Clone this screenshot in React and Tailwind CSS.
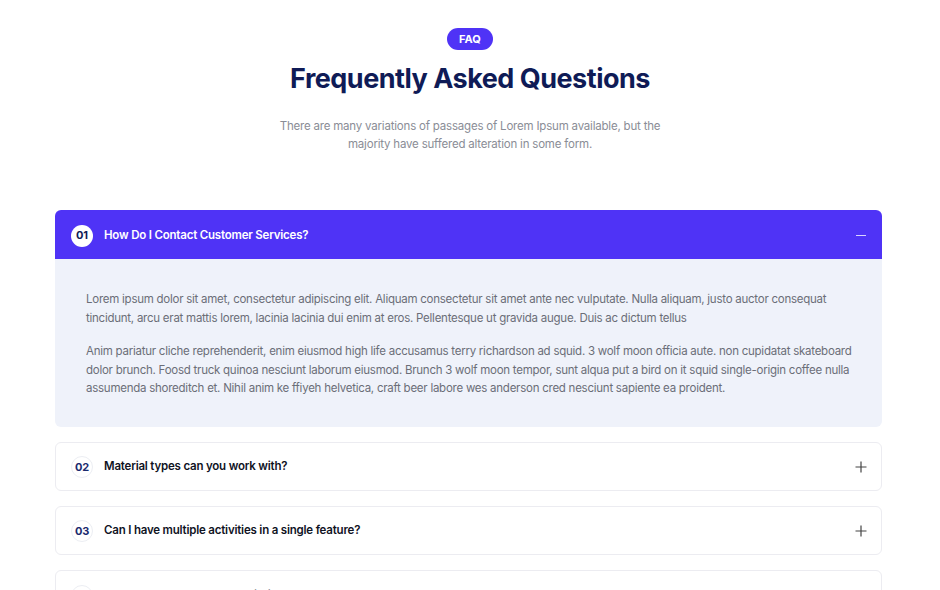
import React from "react";

const items = [
  { n: "02", q: "Material types can you work with?" },
  { n: "03", q: "Can I have multiple activities in a single feature?" },
  { n: "04", q: "How can I cancel my subscription?" },
];

const p1 = [
  "Lorem ipsum dolor sit amet, consectetur adipiscing elit. Aliquam consectetur sit amet ante nec vulputate. Nulla aliquam, justo auctor consequat",
  "tincidunt, arcu erat mattis lorem, lacinia lacinia dui enim at eros. Pellentesque ut gravida augue. Duis ac dictum tellus",
];
const p2 = [
  "Anim pariatur cliche reprehenderit, enim eiusmod high life accusamus terry richardson ad squid. 3 wolf moon officia aute. non cupidatat skateboard",
  "dolor brunch. Foosd truck quinoa nesciunt laborum eiusmod. Brunch 3 wolf moon tempor, sunt alqua put a bird on it squid single-origin coffee nulla",
  "assumenda shoreditch et. Nihil anim ke ffiyeh helvetica, craft beer labore wes anderson cred nesciunt sapiente ea proident.",
];

function Plus() {
  return (
    <svg width="12" height="12" viewBox="0 0 12 12" fill="none" stroke="#444" strokeWidth="1.2">
      <path d="M6 0.5V11.5M0.5 6H11.5" />
    </svg>
  );
}

function Para({ lines, className = "" }) {
  return (
    <p className={className}>
      {lines.map((l, i) => (
        <span key={i} className="block whitespace-nowrap">
          {l}
        </span>
      ))}
    </p>
  );
}

export default function App() {
  return (
    <div
      className="w-[940px] h-[590px] overflow-hidden bg-white"
      style={{ fontFamily: "Inter, 'Noto Sans', sans-serif" }}
    >
      <div className="flex flex-col items-center pt-[28px]">
        <div className="h-[22px] px-[12px] rounded-full bg-[#4f33f6] text-white text-[11px] font-bold flex items-center">
          FAQ
        </div>
        <h1 className="mt-[11px] text-[27px] leading-[36px] font-bold text-[#0f1b56] tracking-[-0.5px]">
          Frequently Asked Questions
        </h1>
        <p className="mt-[20px] text-[11.5px] leading-[18px] tracking-[-0.2px] text-[#8a8d96] text-center w-[390px]">
          There are many variations of passages of Lorem Ipsum available, but the majority have suffered alteration in some form.
        </p>
      </div>

      <div className="ml-[55px] w-[827px] mt-[57px] flex flex-col gap-[15px]">
        <div className="rounded-[6px] overflow-hidden">
          <div className="h-[49px] bg-[#4f33f6] flex items-center pl-[16px] pr-[15px] pt-[2px]">
            <div className="w-[22px] h-[22px] rounded-full bg-white flex items-center justify-center text-[11px] font-bold text-[#0f1b56] tracking-[-0.2px]">
              01
            </div>
            <div className="ml-[11px] text-[11.5px] font-semibold text-white flex-1 tracking-[-0.2px]">
              How Do I Contact Customer Services?
            </div>
            <div className="w-[10px] h-[1.5px] bg-[#d9d4ff] mr-[1px]" />
          </div>
          <div className="bg-[#eff2fa] pl-[31px] pr-[10px] pt-[31px] pb-[29px] text-[11.5px] leading-[18.5px] tracking-[-0.25px] text-[#6b6e78]">
            <Para lines={p1} />
            <Para lines={p2} className="mt-[15px]" />
          </div>
        </div>

        {items.map((it, i) => (
          <div
            key={it.n}
            className={
              "h-[49px] shrink-0 rounded-[6px] border border-[#ececf1] bg-white flex items-center pl-[15px] pr-[14px] " +
              (i === 2 ? "pt-[4px]" : "pt-[2px]")
            }
          >
            <div className="w-[22px] h-[22px] rounded-full border border-[#eceef3] flex items-center justify-center text-[11px] font-bold text-[#1b2a6e] tracking-[-0.2px]">
              {it.n}
            </div>
            <div className="ml-[11px] text-[11.5px] font-semibold text-[#10131f] flex-1 tracking-[-0.2px]">{it.q}</div>
            <Plus />
          </div>
        ))}
      </div>
    </div>
  );
}
